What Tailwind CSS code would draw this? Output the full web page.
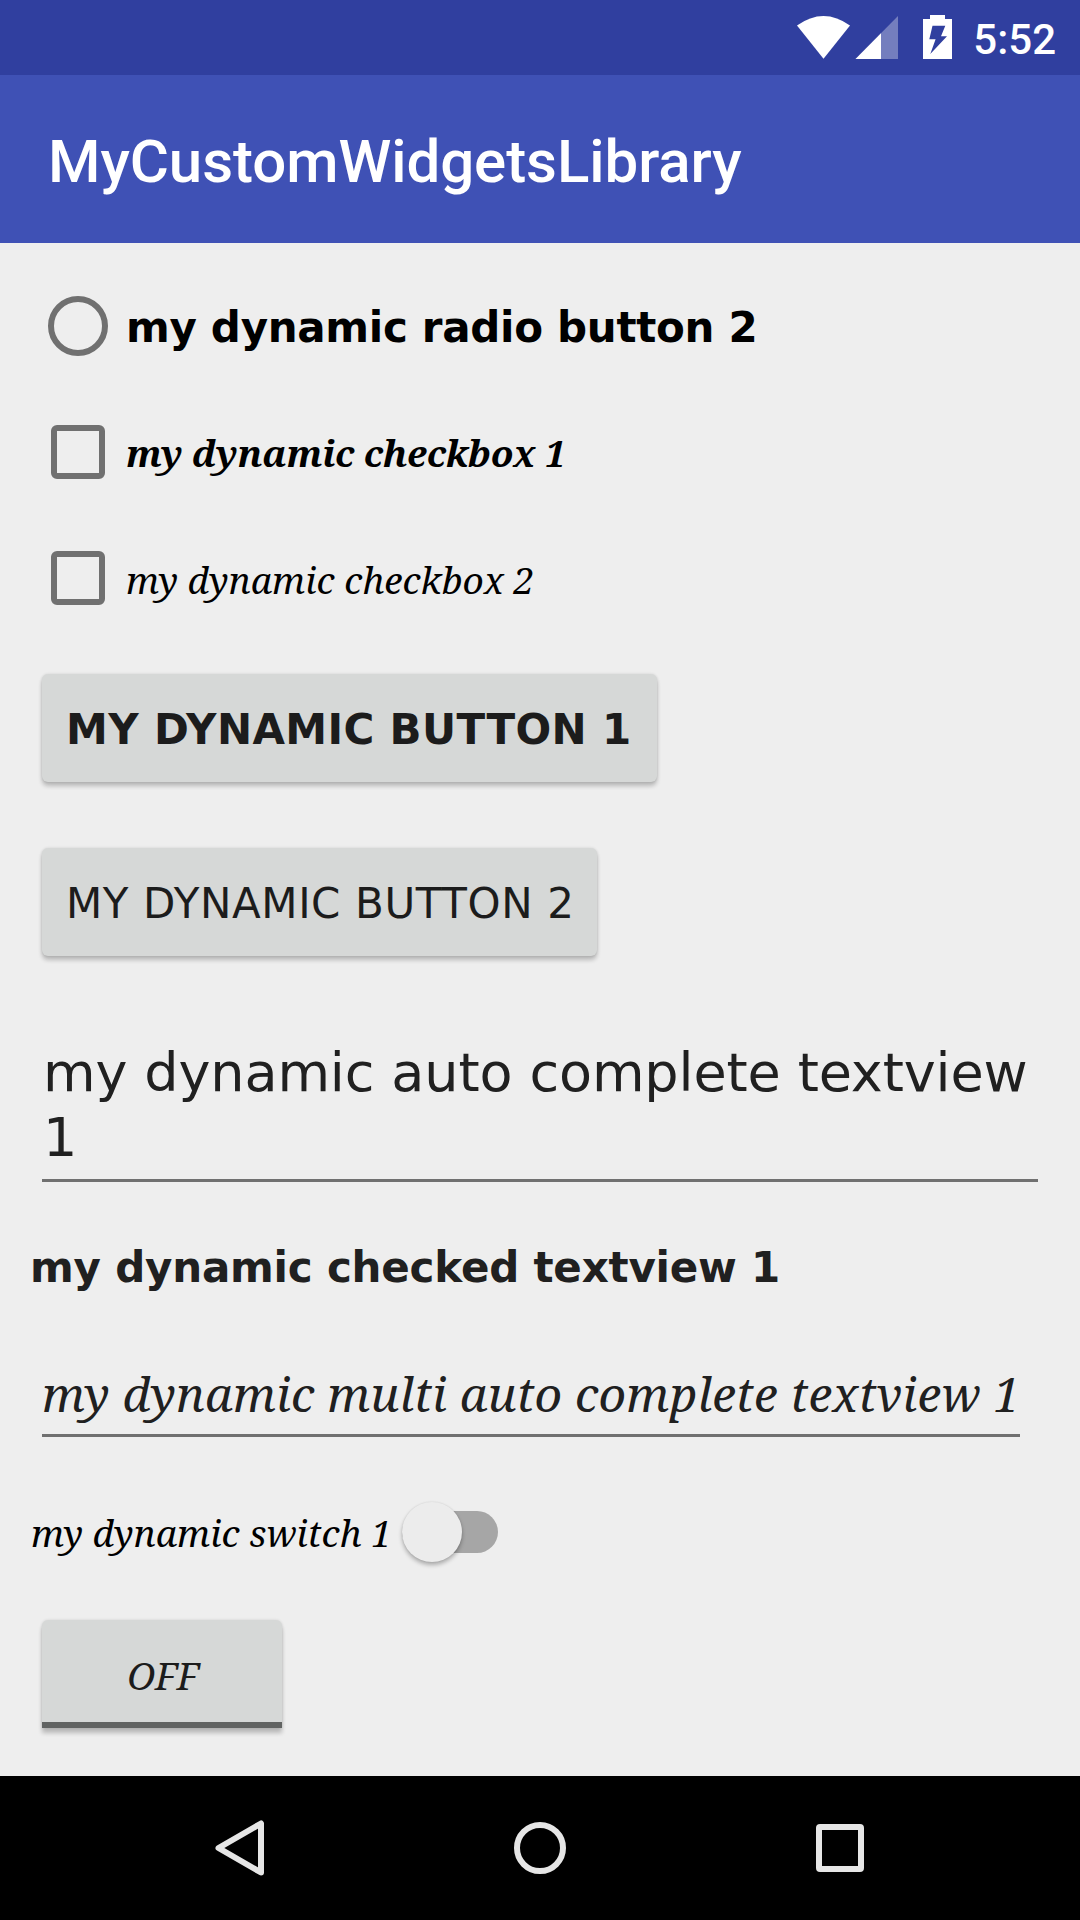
<!DOCTYPE html>
<html lang="en">
<head>
<meta charset="utf-8">
<title>MyCustomWidgetsLibrary</title>
<script src="https://cdn.jsdelivr.net/npm/@tailwindcss/browser@4"></script>
</head>
<body class="w-[1080px] h-[1920px] flex flex-col overflow-hidden bg-[#eeeeee] font-['DejaVu_Sans',sans-serif] text-black whitespace-nowrap">
  <!-- Status bar -->
  <div class="h-[75px] shrink-0 bg-[#303f9f] flex items-center justify-end pr-[24px]">
    <svg class="w-[160px] h-[75px] mr-[16px]" viewBox="797 0 160 75">
      <path d="M797 25.500Q823.500 6.500 850 25.500L823.500 58.700Z" fill="#fff"/>
      <path d="M898 16V59H855.500Z" fill="#fff" fill-opacity=".33"/>
      <path d="M881 33.300V59H855.500Z" fill="#fff"/>
      <path fill-rule="evenodd" d="M930 15h15v4h7v40h-29V19h7zM932.500 25.700L929.300 39.300H935.600L930.300 54L947 36.300H941L945.300 25.700Z" fill="#fff"/>
    </svg>
    <span class="font-['Roboto',sans-serif] font-medium text-[42px] leading-[48px] text-white pt-[5px]">5:52</span>
  </div>
  <!-- App bar -->
  <header class="h-[168px] shrink-0 bg-[#3f51b5] flex items-center pl-[48px] pt-[5px]">
    <h1 class="font-['Roboto',sans-serif] font-medium text-[60px] leading-[72px] text-white tracking-[-0.06px]">MyCustomWidgetsLibrary</h1>
  </header>

  <main class="h-[1533px] shrink-0 flex flex-col items-start pt-[20px]">
    <div class="h-[126px] shrink-0 flex items-center pl-[48px]">
      <span class="size-[60px] rounded-full border-[6px] border-[#707070]"></span>
      <span class="pl-[18px] pt-[3px] font-bold text-[42px] leading-[54px] tracking-[-0.3px]">my dynamic radio button 2</span>
    </div>
    <div class="h-[126px] shrink-0 flex items-center pl-[51px]">
      <span class="size-[54px] rounded-[6px] border-[6px] border-[#707070]"></span>
      <span class="pl-[21px] pt-[2px] font-['Noto_Serif','DejaVu_Serif_Condensed',serif] italic font-bold text-[37px] leading-[54px] tracking-[-0.23px]">my dynamic checkbox 1</span>
    </div>
    <div class="h-[126px] shrink-0 flex items-center pl-[51px]">
      <span class="size-[54px] rounded-[6px] border-[6px] border-[#707070]"></span>
      <span class="pl-[21px] pt-[4px] font-['Noto_Serif','DejaVu_Serif_Condensed',serif] italic text-[37px] leading-[54px]">my dynamic checkbox 2</span>
    </div>

    <button class="mt-[33px] ml-[42px] w-[615px] h-[108px] shrink-0 flex items-center pl-[24px] pt-[3px] rounded-[6px] bg-[#d6d8d7] shadow-[0_4px_4px_rgba(0,0,0,0.22),0_0_3px_rgba(0,0,0,0.12)] font-bold text-[42px] leading-[54px] tracking-[0.365px] text-[#1c1c1c]">MY DYNAMIC BUTTON 1</button>
    <button class="mt-[66px] ml-[42px] w-[555px] h-[108px] shrink-0 flex items-center pl-[24px] pt-[3px] rounded-[6px] bg-[#d6d8d7] shadow-[0_4px_4px_rgba(0,0,0,0.22),0_0_3px_rgba(0,0,0,0.12)] text-[42px] leading-[54px] tracking-[0.6px] text-[#1c1c1c]">MY DYNAMIC BUTTON 2</button>

    <div class="mt-[84px] ml-[42px] w-[996px] h-[142px] shrink-0 pl-px border-b-[3px] border-[#707070] text-[54px] leading-[65px] tracking-[-0.126px] text-[#202020]">my dynamic auto complete textview<br>1</div>
    <div class="mt-[59px] ml-[30px] shrink-0 font-bold text-[42px] leading-[54px] tracking-[-0.2px] text-[#202020]">my dynamic checked textview 1</div>
    <div class="mt-[66px] ml-[42px] w-[978px] h-[76px] shrink-0 pt-px border-b-[3px] border-[#707070] font-['Noto_Serif','DejaVu_Serif_Condensed',serif] italic text-[48px] leading-[64px] tracking-[0.21px] text-[#202020]">my dynamic multi auto complete textview 1</div>

    <div class="mt-[58px] h-[74px] shrink-0 flex items-center pl-[31px]">
      <span class="w-[371px] pt-[2px] font-['Noto_Serif','DejaVu_Serif_Condensed',serif] italic text-[37px] leading-[54px]">my dynamic switch 1</span>
      <span class="w-[96px] h-[42px] rounded-full bg-[#a6a6a6] flex items-center">
        <span class="size-[60px] shrink-0 rounded-full bg-[#ececec] shadow-[0_3px_4px_rgba(0,0,0,0.28),0_0_2px_rgba(0,0,0,0.1)]"></span>
      </span>
    </div>

    <button class="mt-[51px] ml-[42px] w-[240px] h-[108px] shrink-0 flex items-center justify-center pl-[2px] pt-[7px] border-b-[6px] border-[#616362] rounded-t-[6px] bg-[#d6d8d7] shadow-[0_5px_4px_rgba(0,0,0,0.22),0_0_3px_rgba(0,0,0,0.12)] font-['Noto_Serif','DejaVu_Serif_Condensed',serif] italic text-[38px] leading-[54px] tracking-[-0.5px] text-[#1c1c1c]">OFF</button>
  </main>

  <!-- Navigation bar -->
  <nav class="h-[144px] shrink-0 bg-black">
    <svg class="w-[1080px] h-[144px]" viewBox="0 0 1080 144" fill="none" stroke="#e6e6e6" stroke-width="6" stroke-linejoin="round">
      <path d="M261 47.500V96.500L218.500 72Z"/>
      <circle cx="540" cy="72" r="23"/>
      <rect x="819" y="51" width="42" height="42" rx="1"/>
    </svg>
  </nav>
</body>
</html>
